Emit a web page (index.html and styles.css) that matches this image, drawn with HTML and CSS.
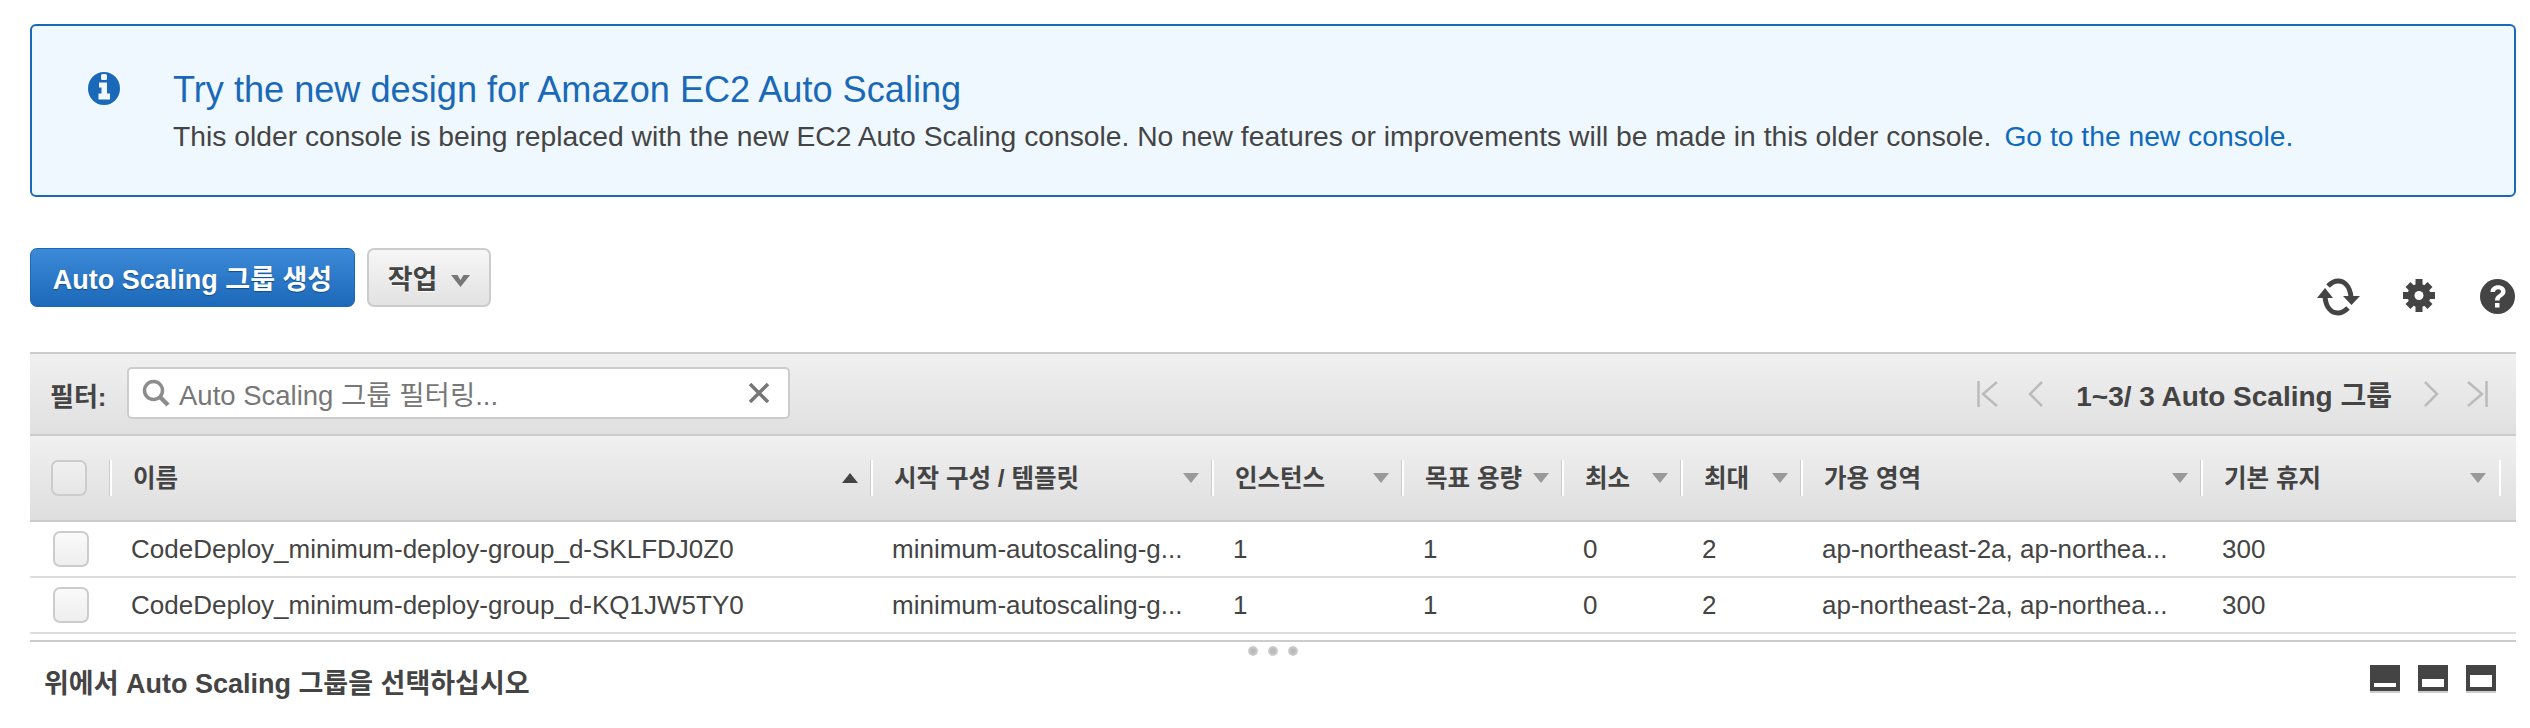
FILE: index.html
```html
<!DOCTYPE html>
<html lang="ko">
<head>
<meta charset="utf-8">
<title>Auto Scaling</title>
<link rel="stylesheet" href="styles.css">
</head>
<body>
<section class="banner">
  <svg class="info-icon" viewBox="0 0 32 33"><ellipse cx="16" cy="16.500" rx="16" ry="16.500" fill="#1a69b8"/><rect x="13" y="2" width="6" height="6" rx="1.500" fill="#f0f8ff"/><path d="M11 10.500h8v11h3v6H10.500v-6h3v-6H11z" fill="#f0f8ff"/></svg>
  <div class="banner-text">
    <h1 class="banner-title">Try the new design for Amazon EC2 Auto Scaling</h1>
    <p class="banner-body">This older console is being replaced with the new EC2 Auto Scaling console. No new features or improvements will be made in this older console.<a class="banner-link">Go to the new console.</a></p>
  </div>
</section>

<div class="toolbar">
  <button class="btn btn-primary">Auto Scaling 그룹 생성</button>
  <button class="btn btn-default">작업<svg class="btn-caret" viewBox="0 0 19 13"><path d="M0 1h6.500l3 5 3-5H19L9.500 13z" fill="#777"/></svg></button>
  <div class="tools">
    <svg class="tool tool-refresh" viewBox="0 0 43 38"><path d="M11 8c3-3 6-5 10-5 7 0 12 6 13 16" fill="none" stroke="#444" stroke-width="5"/><path d="M8 19c1 10 6 16 13 16 4 0 7-2 10-5" fill="none" stroke="#444" stroke-width="5"/><path d="M0 20l8-10 8 10zM26 18h17l-8.500 9z" fill="#444"/></svg>
    <svg class="tool tool-gear" viewBox="0 0 32 33"><g stroke="#444" stroke-width="7"><path d="M16 0v33M0 16.500h32M5 5.500l22 22M27 5.500l-22 22"/></g><circle cx="16" cy="16.500" r="11.500" fill="#444"/><circle cx="16" cy="16.500" r="4.500" fill="#fff"/></svg>
    <svg class="tool tool-help" viewBox="0 0 35 35"><circle cx="17.500" cy="17.500" r="17.500" fill="#444"/><path d="M10.500 13c0-9 15-9 15-.5 0 5-6 5-6 9h-4.500c0-6 6-6 6-9 0-3-6-3-6 .5z" fill="#fff"/><rect x="15" y="24" width="4.500" height="4.500" fill="#fff"/></svg>
  </div>
</div>

<section class="grid-panel">
  <div class="filter-bar">
    <span class="filter-label">필터:</span>
    <div class="filter-input">
      <svg class="search-icon" viewBox="0 0 28 28"><circle cx="11.500" cy="11.500" r="9" fill="none" stroke="#8c8c8c" stroke-width="3.500"/><path d="M18 18l8 8" stroke="#8c8c8c" stroke-width="4.500"/></svg>
      <span class="placeholder">Auto Scaling 그룹 필터링...</span>
      <svg class="clear-icon" viewBox="0 0 22 20"><path d="M2 1l18 18M20 1L2 19" stroke="#777" stroke-width="3.500"/></svg>
    </div>
    <div class="pager">
      <svg class="pg pg-end" viewBox="0 0 22 26"><path d="M1.500 0v26M20 1L6 13l14 12" fill="none" stroke="#bbb" stroke-width="2.500"/></svg>
      <svg class="pg pg-step pg-prev" viewBox="0 0 15 26"><path d="M14 1L2 13l12 12" fill="none" stroke="#bbb" stroke-width="2.500"/></svg>
      <span class="pager-text">1~3/ 3 Auto Scaling 그룹</span>
      <svg class="pg pg-step pg-next" viewBox="0 0 15 26"><path d="M1 1l12 12L1 25" fill="none" stroke="#bbb" stroke-width="2.500"/></svg>
      <svg class="pg pg-end pg-last" viewBox="0 0 22 26"><path d="M20.500 0v26M2 1l14 12L2 25" fill="none" stroke="#bbb" stroke-width="2.500"/></svg>
    </div>
  </div>

  <div class="head cols">
    <div class="hcell hcell-check"><span class="check check-head"></span></div>
    <div class="hcell"><span class="htext">이름</span><i class="sort sort-up"></i></div>
    <div class="hcell"><span class="htext">시작 구성 / 템플릿</span><i class="sort"></i></div>
    <div class="hcell"><span class="htext">인스턴스</span><i class="sort"></i></div>
    <div class="hcell"><span class="htext">목표 용량</span><i class="sort"></i></div>
    <div class="hcell"><span class="htext">최소</span><i class="sort"></i></div>
    <div class="hcell"><span class="htext">최대</span><i class="sort"></i></div>
    <div class="hcell"><span class="htext">가용 영역</span><i class="sort"></i></div>
    <div class="hcell"><span class="htext">기본 휴지</span><i class="sort"></i></div>
  </div>

  <div class="row cols">
    <div class="cell cell-check"><span class="check"></span></div>
    <div class="cell">CodeDeploy_minimum-deploy-group_d-SKLFDJ0Z0</div>
    <div class="cell">minimum-autoscaling-g...</div>
    <div class="cell">1</div>
    <div class="cell">1</div>
    <div class="cell">0</div>
    <div class="cell">2</div>
    <div class="cell">ap-northeast-2a, ap-northea...</div>
    <div class="cell">300</div>
  </div>
  <div class="row cols">
    <div class="cell cell-check"><span class="check"></span></div>
    <div class="cell">CodeDeploy_minimum-deploy-group_d-KQ1JW5TY0</div>
    <div class="cell">minimum-autoscaling-g...</div>
    <div class="cell">1</div>
    <div class="cell">1</div>
    <div class="cell">0</div>
    <div class="cell">2</div>
    <div class="cell">ap-northeast-2a, ap-northea...</div>
    <div class="cell">300</div>
  </div>
</section>

<section class="detail">
  <div class="dots"><i></i><i></i><i></i></div>
  <div class="detail-row">
    <span class="detail-title">위에서 Auto Scaling 그룹을 선택하십시오</span>
    <div class="layouts">
      <span class="layout layout-s"></span>
      <span class="layout layout-m"></span>
      <span class="layout layout-l"></span>
    </div>
  </div>
</section>
</body>
</html>
```

FILE: styles.css
```css
* { box-sizing: border-box; }
html, body { margin: 0; height: 100%; }
body {
  padding: 24px 14px 0 30px;
  background: #fff;
  color: #444;
  font-family: "Liberation Sans", "Noto Sans CJK KR", sans-serif;
  overflow: hidden;
}

/* banner */
.banner {
  display: flex;
  height: 173px;
  padding: 46px 0 0 56px;
  background: #f0f8ff;
  border: 2px solid #1a69b8;
  border-radius: 6px;
}
.info-icon { width: 32px; height: 33px; flex: none; margin-right: 53px; }
.banner-text { margin-top: -2px; }
.banner-title {
  margin: 0;
  color: #1a69b8;
  font-size: 36.150px;
  font-weight: 400;
  line-height: 40px;
}
.banner-body { margin: 10px 0 0; font-size: 28.250px; line-height: 32px; color: #444; }
.banner-link { color: #0f6abf; margin-left: 13px; }

/* toolbar */
.toolbar { display: flex; height: 68px; margin-top: 51px; gap: 12px; }
.btn {
  height: 59px;
  border-radius: 7px;
  font-family: inherit;
  font-size: 27px;
  font-weight: 700;
  padding: 0;
}
.btn-primary {
  width: 325px;
  color: #fff;
  background: linear-gradient(#3d8ad9, #1b69b8);
  border: 1px solid #1a69b8;
  text-shadow: 0 1px 1px #124d8a;
}
.btn-default {
  width: 124px;
  color: #444;
  background: linear-gradient(#f6f6f6, #e2e2e2);
  border: 2px solid #ccc;
  text-shadow: 0 1px 0 #fff;
}
.btn-caret { width: 19px; height: 13px; margin-left: 14px; vertical-align: 2px; }
.tools { display: flex; margin-left: auto; align-items: flex-end; padding-right: 1px; }
.tool { flex: none; }
.tool-refresh { width: 43px; height: 38px; }
.tool-gear { width: 32px; height: 33px; margin: 0 45px 4px 43px; }
.tool-help { width: 35px; height: 35px; margin-bottom: 2px; }

/* filter bar */
.grid-panel { margin-top: 36px; }
.filter-bar {
  display: flex;
  align-items: center;
  height: 84px;
  padding-left: 20px;
  background: linear-gradient(#f0f0f0, #e0e0e0);
  border-top: 2px solid #ccc;
  border-bottom: 2px solid #ccc;
}
.filter-label { width: 77px; font-size: 26px; font-weight: 700; }
.filter-input {
  display: flex;
  align-items: center;
  width: 663px;
  height: 52px;
  margin-bottom: 2px;
  padding: 0 18px 0 13px;
  background: #fff;
  border: 2px solid #ccc;
  border-radius: 5px;
}
.search-icon { width: 28px; height: 28px; flex: none; }
.placeholder { margin-left: 9px; font-size: 27.500px; color: #777; }
.clear-icon { width: 22px; height: 20px; flex: none; margin-left: auto; }
.pager { display: flex; align-items: center; margin-left: auto; padding-right: 28px; }
.pg { flex: none; height: 26px; }
.pg-end { width: 22px; }
.pg-step { width: 15px; }
.pg-prev { margin: 0 33px 0 29px; }
.pg-next { margin: 0 27px 0 32px; }
.pager-text { font-size: 28px; font-weight: 700; }

/* table */
.cols { display: grid; grid-template-columns: 80px 761px 341px 190px 160px 119px 120px 400px 300px 1fr; }
.head {
  height: 86px;
  padding-bottom: 24px;
  align-items: stretch;
  padding-top: 24px;
  background: linear-gradient(#f0f0f0, #dedede);
  border-bottom: 2px solid #ccc;
}
.hcell {
  display: flex;
  align-items: center;
  justify-content: space-between;
  padding: 0 13px 0 21px;
  border-left: 2px solid #fff;
  box-shadow: -1px 0 0 #ccc;
}
.hcell-check { padding: 0 0 0 21px; border-left: 0; box-shadow: none; }
.hcell:last-child { border-right: 2px solid #fff; }
.htext { font-size: 24.500px; font-weight: 700; position: relative; top: -2px; }
.sort { width: 0; height: 0; border: 8px solid transparent; border-top: 10px solid #999; border-bottom: 0; }
.sort-up { border-top: 0; border-bottom: 10px solid #444; }
.check {
  display: block;
  width: 36px;
  height: 36px;
  background: linear-gradient(#fafafa, #eee);
  border: 2px solid #ccc;
  border-radius: 7px;
}
.check-head { background: linear-gradient(#f0f0f0, #e6e6e6); }
.row { height: 56px; border-bottom: 2px solid #ddd; }
.cell {
  display: flex;
  align-items: center;
  padding-left: 21px;
  font-size: 26px;
  color: #444;
  white-space: nowrap;
  overflow: hidden;
}
.cell-check { padding-left: 23px; overflow: visible; }

/* detail */
.detail { margin-top: 6px; border-top: 2px solid #ccc; }
.dots { display: flex; justify-content: center; gap: 10px; padding-top: 4px; }
.dots i {
  display: block;
  width: 10px;
  height: 10px;
  border-radius: 50%;
  background: radial-gradient(#bbb 30%, #e4e4e4);
}
.detail-row { display: flex; align-items: center; justify-content: space-between; margin-top: 5px; padding: 0 20px 0 14px; height: 40px; }
.detail-title { font-size: 27px; font-weight: 700; }
.layouts { display: flex; gap: 18px; margin-bottom: 4px; }
.layout {
  display: flex;
  align-items: flex-end;
  width: 30px;
  height: 28px;
  padding: 0 4px 4px;
  background: #444;
  border-bottom: 2px solid #ccc;
}
.layout::after { content: ""; display: block; width: 100%; background: #fff; }
.layout-s::after { height: 4px; }
.layout-m::after { height: 8px; }
.layout-l::after { height: 12px; }
```
